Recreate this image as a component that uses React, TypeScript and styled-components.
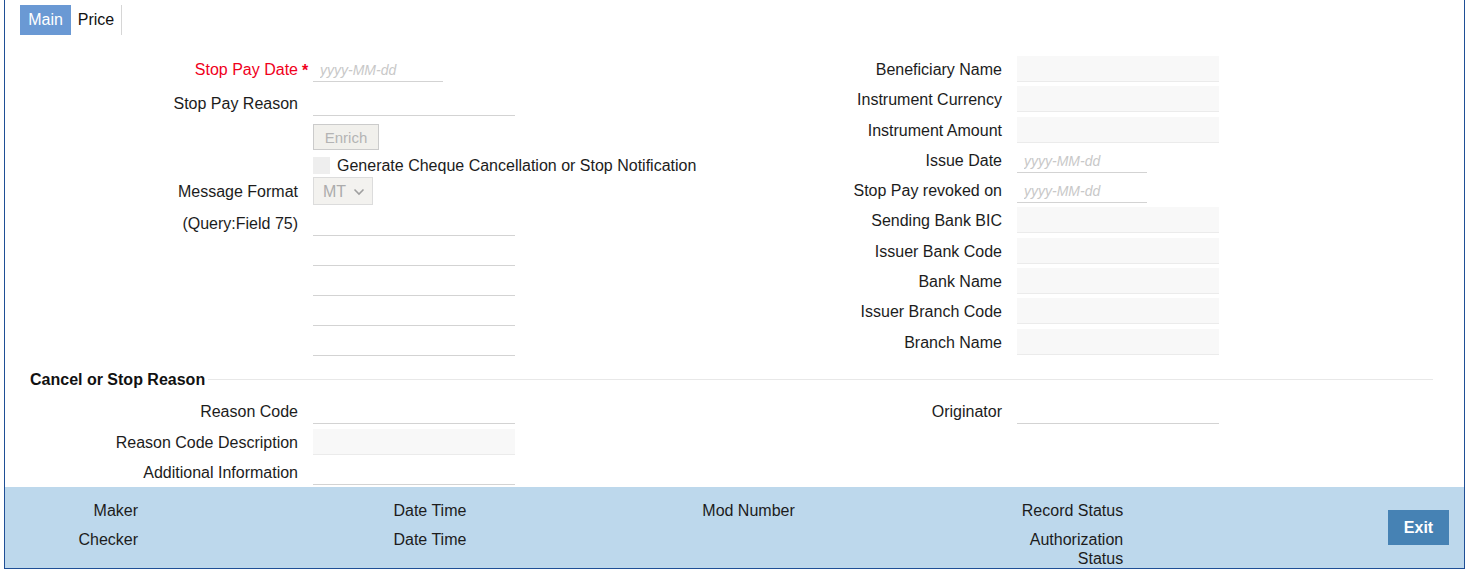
import React from "react";
import styled, { createGlobalStyle } from "styled-components";

const GlobalStyle = createGlobalStyle`
  html, body {
    margin: 0;
    padding: 0;
    background: #fff;
  }
  body {
    font-family: "Liberation Sans", Arial, sans-serif;
    font-size: 16px;
    color: #1c1c1c;
  }
  * {
    box-sizing: border-box;
  }
`;

const rightRows = [
  { label: "Beneficiary Name", kind: "ro" },
  { label: "Instrument Currency", kind: "ro" },
  { label: "Instrument Amount", kind: "ro" },
  { label: "Issue Date", kind: "date" },
  { label: "Stop Pay revoked on", kind: "date" },
  { label: "Sending Bank BIC", kind: "ro" },
  { label: "Issuer Bank Code", kind: "ro" },
  { label: "Bank Name", kind: "ro" },
  { label: "Issuer Branch Code", kind: "ro" },
  { label: "Branch Name", kind: "ro" },
];

const Chevron = () => (
  <svg width="12" height="8" viewBox="0 0 12 8">
    <path d="M1.5 1.5 L6 6 L10.5 1.5" fill="none" stroke="#a0a0a0" strokeWidth="1.6" />
  </svg>
);

export default function App() {
  return (
    <>
      <GlobalStyle />
      <Frame>
        <Body>
          <TabBar>
            <Tab $active>Main</Tab>
            <Tab>Price</Tab>
          </TabBar>

          <FormGrid>
            <Column>
              <Row $h={26}>
                <Label $required>Stop Pay Date</Label>
                <Gutter>*</Gutter>
                <TextInput $w={130} placeholder="yyyy-MM-dd" />
              </Row>
              <Row $h={26} $mt={8}>
                <Label>Stop Pay Reason</Label>
                <Gutter />
                <TextInput $w={202} />
              </Row>
              <Row $h={26} $mt={8}>
                <Label />
                <Gutter />
                <Button disabled>Enrich</Button>
              </Row>
              <Row $h={22} $mt={4}>
                <Label />
                <Gutter />
                <CheckBox />
                <CheckText>Generate Cheque Cancellation or Stop Notification</CheckText>
              </Row>
              <Row $h={28} $mt={1}>
                <Label>Message Format</Label>
                <Gutter />
                <SelectBox>
                  <span>MT</span>
                  <Chevron />
                </SelectBox>
              </Row>
              <Row $h={26} $mt={5}>
                <Label>(Query:Field 75)</Label>
                <Gutter />
                <TextInput $w={202} />
              </Row>
              {[0, 1, 2, 3].map((i) => (
                <Row key={i} $h={26} $mt={4}>
                  <Label />
                  <Gutter />
                  <TextInput $w={202} />
                </Row>
              ))}
            </Column>

            <Column $gap={4.3}>
              {rightRows.map((r) => (
                <Row key={r.label} $h={26}>
                  <Label>{r.label}</Label>
                  <Gutter />
                  {r.kind === "date" ? (
                    <TextInput $w={130} placeholder="yyyy-MM-dd" />
                  ) : (
                    <TextInput $w={202} $readOnly readOnly />
                  )}
                </Row>
              ))}
            </Column>
          </FormGrid>

          <SectionHead>
            <SectionTitle>Cancel or Stop Reason</SectionTitle>
            <SectionLine />
          </SectionHead>

          <SectionGrid>
            <Column $gap={4.5}>
              <Row $h={26}>
                <Label>Reason Code</Label>
                <Gutter />
                <TextInput $w={202} />
              </Row>
              <Row $h={26}>
                <Label>Reason Code Description</Label>
                <Gutter />
                <TextInput $w={202} $readOnly readOnly />
              </Row>
              <Row $h={26}>
                <Label>Additional Information</Label>
                <Gutter />
                <TextInput $w={202} />
              </Row>
            </Column>
            <Column>
              <Row $h={26}>
                <Label>Originator</Label>
                <Gutter />
                <TextInput $w={202} />
              </Row>
            </Column>
          </SectionGrid>
        </Body>

        <Footer>
          <AuditGrid>
            <AuditLabel>Maker</AuditLabel>
            <AuditLabel>Date Time</AuditLabel>
            <AuditLabel>Mod Number</AuditLabel>
            <AuditLabel>Record Status</AuditLabel>
            <AuditLabel>Checker</AuditLabel>
            <AuditLabel>Date Time</AuditLabel>
            <AuditLabel />
            <AuditLabel>Authorization Status</AuditLabel>
          </AuditGrid>
          <ExitButton>Exit</ExitButton>
        </Footer>
      </Frame>
    </>
  );
}

const Frame = styled.div`
  margin-left: 4px;
  width: 1461px;
  height: 569px;
  border: 1px solid #1f4f96;
  border-top: none;
  display: flex;
  flex-direction: column;
  background: #fff;
`;

const Body = styled.div`
  flex: 1;
  padding: 5px 15px 0;
`;

const TabBar = styled.div`
  display: flex;
  height: 30px;
`;

const Tab = styled.div<{ $active?: boolean }>`
  width: 51px;
  display: flex;
  align-items: center;
  justify-content: center;
  font-size: 16px;
  background: ${(p) => (p.$active ? "#6a99d4" : "transparent")};
  color: ${(p) => (p.$active ? "#fff" : "#111")};
  border-right: ${(p) => (p.$active ? "none" : "1px solid #d6d6d6")};
`;

const FormGrid = styled.div`
  margin-top: 21px;
  display: grid;
  grid-template-columns: 704px 1fr;
`;

const Column = styled.div<{ $gap?: number }>`
  display: flex;
  flex-direction: column;
  gap: ${(p) => p.$gap || 0}px;
`;

const Row = styled.div<{ $h: number; $mt?: number }>`
  display: flex;
  align-items: center;
  height: ${(p) => p.$h}px;
  margin-top: ${(p) => p.$mt || 0}px;
`;

const Label = styled.div<{ $required?: boolean }>`
  width: 278px;
  flex: none;
  padding-top: 2px;
  text-align: right;
  white-space: nowrap;
  font-size: 16px;
  color: ${(p) => (p.$required ? "#f0001c" : "#1c1c1c")};
`;

const Gutter = styled.div`
  width: 15px;
  flex: none;
  padding-left: 4px;
  padding-top: 4px;
  color: #f0001c;
  font-size: 16px;
  font-weight: bold;
`;

const TextInput = styled.input<{ $w: number; $readOnly?: boolean }>`
  width: ${(p) => p.$w}px;
  height: 26px;
  border: 0;
  border-bottom: 1px solid ${(p) => (p.$readOnly ? "#ebebeb" : "#d3d3d3")};
  background: ${(p) => (p.$readOnly ? "#f8f8f8" : "#fff")};
  padding: 2px 7px 0;
  font-family: inherit;
  font-size: 15px;
  outline: none;

  &::placeholder {
    color: #c8c8c8;
    font-style: italic;
    font-size: 14px;
  }
`;

const Button = styled.button`
  width: 66px;
  height: 26px;
  border: 1px solid #cbcbcb;
  background: #f1f0ec;
  color: #b4b4b4;
  font-family: inherit;
  font-size: 15px;
  padding: 0;
`;

const CheckBox = styled.span`
  width: 17px;
  height: 17px;
  background: #eeeeee;
  flex: none;
`;

const CheckText = styled.span`
  margin-left: 7px;
  padding-top: 2px;
  font-size: 16px;
  white-space: nowrap;
`;

const SelectBox = styled.div`
  width: 60px;
  height: 28px;
  border: 1px solid #dcdcdc;
  background: #f3f2ef;
  display: flex;
  align-items: center;
  justify-content: space-between;
  padding: 1px 7px 0 9px;
  color: #acacac;
  font-size: 16px;
`;

const SectionHead = styled.div`
  margin-top: 13px;
  height: 20px;
  display: flex;
  align-items: center;
  padding: 0 16px 0 10px;
`;

const SectionTitle = styled.div`
  font-weight: bold;
  font-size: 16px;
  padding-top: 2px;
  color: #111;
  white-space: nowrap;
`;

const SectionLine = styled.div`
  flex: 1;
  height: 1px;
  background: #e8e8e8;
  margin-left: 3px;
`;

const SectionGrid = styled.div`
  margin-top: 9px;
  display: grid;
  grid-template-columns: 704px 1fr;
`;

const Footer = styled.div`
  height: 81px;
  flex: none;
  background: #bdd8ec;
  display: flex;
  align-items: center;
  padding: 0 15px 0 28px;
`;

const AuditGrid = styled.div`
  align-self: flex-start;
  padding-top: 14px;
  display: grid;
  grid-template-columns: repeat(4, 328.4px);
  row-gap: 10px;
`;

const AuditLabel = styled.div`
  width: 105px;
  text-align: right;
  font-size: 16px;
  line-height: 19px;
  color: #1c1c1c;
`;

const ExitButton = styled.button`
  margin-left: auto;
  width: 61px;
  height: 35px;
  border: 0;
  background: #4682b4;
  color: #fff;
  font-family: inherit;
  font-weight: bold;
  font-size: 16px;
  padding: 0;
`;
